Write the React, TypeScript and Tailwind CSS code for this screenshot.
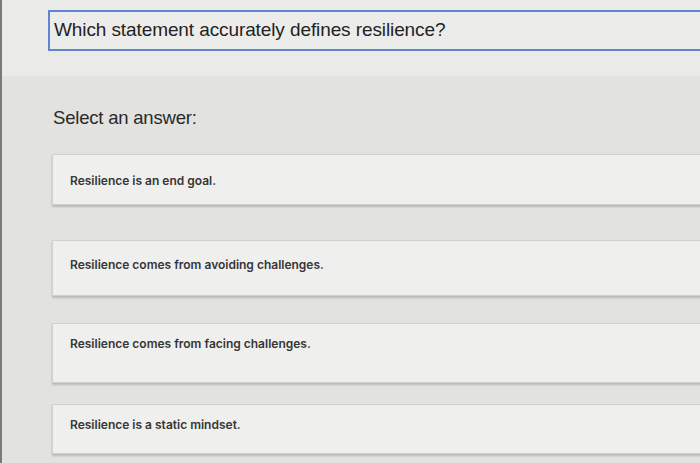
import React from "react";

const answers = [
  { text: "Resilience is an end goal.", cls: "mt-[24px] h-[51px] pt-[17px]" },
  { text: "Resilience comes from avoiding challenges.", cls: "mt-[35px] h-[56px] pt-[15px]" },
  { text: "Resilience comes from facing challenges.", cls: "mt-[27px] h-[60px] pt-[11px]" },
  { text: "Resilience is a static mindset.", cls: "mt-[21px] h-[50px] pt-[11px]" },
];

export default function App() {
  return (
    <div
      className="w-[700px] h-[463px] overflow-hidden bg-[#e2e2e0] border-l-2 border-[#7a7a7a] flex flex-col"
      style={{ fontFamily: "'Liberation Sans', Arial, sans-serif" }}
    >
      <div className="bg-[#eaeae9] h-[76px] pt-[10px] pl-[46px] shrink-0 overflow-hidden">
        <div className="h-[41px] w-[720px] min-w-[720px] shrink-0 border-2 border-r-0 border-[#5f86cc] bg-[#ececeb] pl-[4px] flex items-center text-[19px] text-[#232323] tracking-[-0.1px]">
          Which statement accurately defines resilience?
        </div>
      </div>
      <div className="pl-[51px] pt-[30px] text-[18.5px] text-[#2a2a2a] tracking-[-0.2px] leading-[24px]">
        Select an answer:
      </div>
      <div className="pl-[50px] flex flex-col">
        {answers.map((a) => (
          <div
            key={a.text}
            className={`${a.cls} w-[700px] min-w-[700px] bg-[#efefee] border border-r-0 border-[#cfcfcd] shadow-[0_2px_2px_rgba(0,0,0,0.18)] pl-[17px] text-[12px] text-[#363636] leading-[18px]`}
            style={{ fontFamily: "Inter, 'Liberation Sans', sans-serif", fontWeight: 600 }}
          >
            {a.text}
          </div>
        ))}
      </div>
    </div>
  );
}
